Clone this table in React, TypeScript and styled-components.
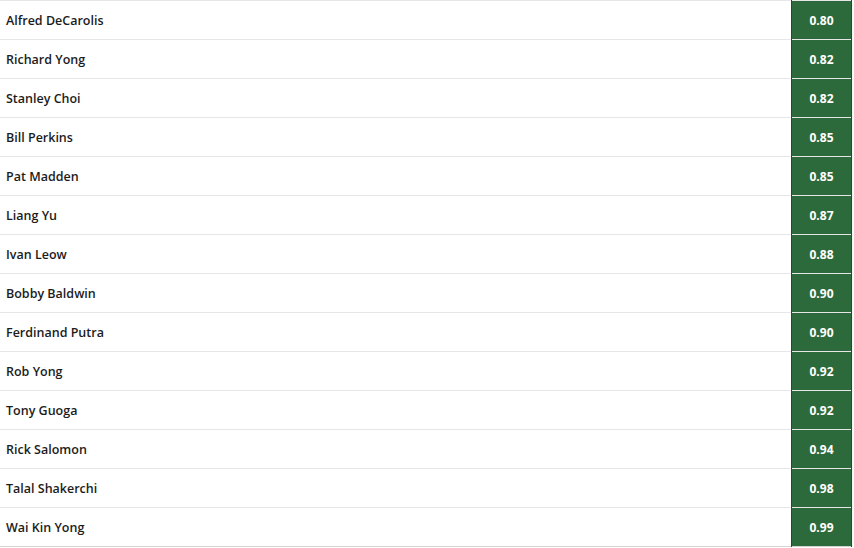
import React from 'react';
import styled, { createGlobalStyle } from 'styled-components';

const GlobalStyle = createGlobalStyle`
  html, body {
    margin: 0;
    padding: 0;
    background: #fff;
  }
  body {
    font-family: 'Open Sans', 'Liberation Sans', sans-serif;
  }
`;

const ROWS: { name: string; value: string }[] = [
  { name: 'Alfred DeCarolis', value: '0.80' },
  { name: 'Richard Yong', value: '0.82' },
  { name: 'Stanley Choi', value: '0.82' },
  { name: 'Bill Perkins', value: '0.85' },
  { name: 'Pat Madden', value: '0.85' },
  { name: 'Liang Yu', value: '0.87' },
  { name: 'Ivan Leow', value: '0.88' },
  { name: 'Bobby Baldwin', value: '0.90' },
  { name: 'Ferdinand Putra', value: '0.90' },
  { name: 'Rob Yong', value: '0.92' },
  { name: 'Tony Guoga', value: '0.92' },
  { name: 'Rick Salomon', value: '0.94' },
  { name: 'Talal Shakerchi', value: '0.98' },
  { name: 'Wai Kin Yong', value: '0.99' },
];

const App: React.FC = () => {
  return (
    <>
      <GlobalStyle />
      <Wrap>
        <Table>
          <tbody>
            {ROWS.map((r) => (
              <Row key={r.name}>
                <NameCell>{r.name}</NameCell>
                <ValueCell>{r.value}</ValueCell>
              </Row>
            ))}
          </tbody>
        </Table>
      </Wrap>
    </>
  );
};

const Wrap = styled.div`
  width: 852px;
  box-shadow: 0 2px 3px rgba(0, 0, 0, 0.12);
`;

const Table = styled.table`
  width: 100%;
  border-collapse: collapse;
  border-bottom: 1px solid #d4d4d4;
`;

const Row = styled.tr`
  height: 39px;
  border-top: 1px solid #e6e6e6;
`;

const NameCell = styled.td`
  padding: 0 6px;
  font-size: 12.5px;
  font-weight: 600;
  color: #1c1c1c;
  text-align: left;
`;

const ValueCell = styled.td`
  width: 59px;
  padding: 0;
  background: #2d6a3b;
  border-left: 1px solid #1f4d2a;
  border-right: 1px solid #1f4d2a;
  color: #fff;
  font-size: 12px;
  font-weight: 700;
  text-align: center;
`;

export default App;
